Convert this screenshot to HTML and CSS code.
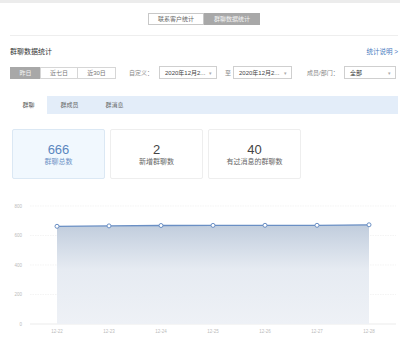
FILE: index.html
```html
<!DOCTYPE html>
<html lang="zh">
<head>
<meta charset="utf-8">
<link rel="stylesheet" href="styles.css">
</head>
<body>
<div class="topbar"></div>
<div class="page">
  <div class="switch-wrap">
    <div class="switch">
      <span class="sw">联系客户统计</span>
      <span class="sw active">群聊数据统计</span>
    </div>
  </div>
  <div class="title-row">
    <span class="title">群聊数据统计</span>
    <span class="help">统计说明 &gt;</span>
  </div>
  <div class="filter-row">
    <div class="range">
      <span class="rb active">昨日</span><span class="rb">近七日</span><span class="rb">近30日</span>
    </div>
    <span class="lbl l1">自定义：</span>
    <span class="sel s1"><span class="v">2020年12月2...</span><span class="arr">▾</span></span>
    <span class="lbl l2">至</span>
    <span class="sel s2"><span class="v">2020年12月2...</span><span class="arr">▾</span></span>
    <span class="lbl l3">成员/部门：</span>
    <span class="sel s3"><span class="v dark">全部</span><span class="arr">▾</span></span>
  </div>
  <div class="tabs">
    <span class="tab active">群聊</span><span class="tab">群成员</span><span class="tab">群消息</span>
  </div>
  <div class="cards">
    <div class="card hl"><div class="num">666</div><div class="cap">群聊总数</div></div>
    <div class="card"><div class="num">2</div><div class="cap">新增群聊数</div></div>
    <div class="card"><div class="num">40</div><div class="cap">有过消息的群聊数</div></div>
  </div>
</div>
<div class="chart">
  <svg width="400" height="156" viewBox="0 185 400 156" xmlns="http://www.w3.org/2000/svg">
    <defs>
      <linearGradient id="g" x1="0" y1="0" x2="0" y2="1">
        <stop offset="0" stop-color="#c1cddd"/>
        <stop offset="0.45" stop-color="#e6ebf2"/>
        <stop offset="1" stop-color="#eef1f6"/>
      </linearGradient>
    </defs>
    <g stroke="#ececec" stroke-width="0.6" stroke-dasharray="1.5 1">
      <line x1="30" y1="205" x2="396" y2="205"/>
      <line x1="30" y1="234.5" x2="396" y2="234.5"/>
      <line x1="30" y1="264" x2="396" y2="264"/>
      <line x1="30" y1="293.5" x2="396" y2="293.5"/>
    </g>
    <line x1="30" y1="323" x2="396" y2="323" stroke="#e6e6e6" stroke-width="0.8"/>
    <path d="M57 225.3 L109 224.9 L161 224.5 L213 224.4 L265 224.3 L317 224.3 L369 223.8 L369 323 L57 323 Z" fill="url(#g)"/>
    <polyline points="57,225.3 109,224.9 161,224.5 213,224.4 265,224.3 317,224.3 369,223.8" fill="none" stroke="#6a8fc4" stroke-width="1.3"/>
    <g fill="#fff" stroke="#6a8fc4" stroke-width="1">
      <circle cx="57" cy="225.3" r="2"/>
      <circle cx="109" cy="224.9" r="2"/>
      <circle cx="161" cy="224.5" r="2"/>
      <circle cx="213" cy="224.4" r="2"/>
      <circle cx="265" cy="224.3" r="2"/>
      <circle cx="317" cy="224.3" r="2"/>
      <circle cx="369" cy="223.8" r="2"/>
    </g>
    <g font-family="Liberation Sans, sans-serif" font-size="4.5" fill="#bbb" text-anchor="end">
      <text x="22" y="206.5">800</text>
      <text x="22" y="236">600</text>
      <text x="22" y="265.5">400</text>
      <text x="22" y="295">200</text>
      <text x="22" y="324.5">0</text>
    </g>
    <g font-family="Liberation Sans, sans-serif" font-size="4.5" fill="#bbb" text-anchor="middle">
      <text x="57" y="332">12-22</text>
      <text x="109" y="332">12-23</text>
      <text x="161" y="332">12-24</text>
      <text x="213" y="332">12-25</text>
      <text x="265" y="332">12-26</text>
      <text x="317" y="332">12-27</text>
      <text x="369" y="332">12-28</text>
    </g>
  </svg>
</div>
</body>
</html>
```
FILE: styles.css
```css
* { box-sizing: border-box; }
html, body { margin: 0; padding: 0; background: #fff; }
body {
  width: 400px;
  height: 341px;
  overflow: hidden;
  font-family: "Liberation Sans", "Noto Sans CJK SC", sans-serif;
  color: #555;
}
.topbar { height: 3px; background: #ececec; }
.page { padding: 0 2px 0 10px; }
.switch-wrap {
  display: flex;
  justify-content: center;
  padding: 10px 0 10px;
  border-bottom: 1px solid #eeeeee;
}
.switch { display: flex; }
.sw {
  width: 56px;
  height: 12px;
  font-size: 6px;
  line-height: 10px;
  text-align: center;
  border: 1px solid #c8c8c8;
  color: #666;
}
.sw.active { background: #a8a8a8; border-color: #a8a8a8; color: #f4f4f4; }
.title-row {
  display: flex;
  justify-content: space-between;
  align-items: center;
  height: 10px;
  margin-top: 10px;
}
.title { font-size: 7px; color: #333; }
.help { font-size: 6.5px; color: #4a7cc0; }
.filter-row {
  display: flex;
  align-items: center;
  height: 13px;
  margin-top: 10px;
}
.range { display: flex; }
.rb {
  height: 12px;
  font-size: 6px;
  line-height: 10px;
  text-align: center;
  border: 1px solid #d6d6d6;
  color: #777;
  margin-left: -1px;
}
.rb:first-child { margin-left: 0; }
.rb:nth-child(1) { width: 31px; }
.rb:nth-child(2) { width: 38px; }
.rb:nth-child(3) { width: 39px; }
.rb.active { background: #a8a8a8; border-color: #a8a8a8; color: #f4f4f4; }
.lbl { font-size: 6px; color: #888; }
.l1 { margin-left: 13px; width: 30px; }
.l2 { margin-left: 8px; width: 8px; }
.l3 { margin-left: 15px; width: 37px; }
.sel {
  display: flex;
  justify-content: space-between;
  align-items: center;
  height: 13px;
  border: 1px solid #cfcfcf;
  padding: 0 4px 0 5px;
  font-size: 6px;
}
.s1 { width: 58px; }
.s2 { width: 59px; }
.s3 { width: 52px; }
.sel .v { color: #444; }
.sel .v.dark { color: #333; }
.sel .arr { color: #aaa; font-size: 5px; }
.tabs {
  display: flex;
  height: 18px;
  margin-top: 17px;
  background: #e3edf9;
}
.tab {
  width: 45px;
  font-size: 6px;
  line-height: 18px;
  text-align: center;
  color: #666;
}
.tab:first-child { width: 37px; background: #fff; color: #555; }
.tab:nth-child(2) { width: 45px; }
.cards {
  display: flex;
  gap: 5px;
  margin-top: 15px;
  padding-left: 2px;
}
.card {
  width: 93px;
  height: 50px;
  border: 1px solid #eeeeee;
  border-radius: 2px;
  display: flex;
  flex-direction: column;
  align-items: center;
  justify-content: center;
}
.card.hl { background: #f1f8fe; border-color: #dbe8f4; }
.num { font-size: 13px; line-height: 15px; color: #444; }
.cap { font-size: 7px; line-height: 9px; color: #666; margin-top: 0; }
.card.hl .num { color: #5a86be; }
.card.hl .cap { color: #6d93c6; }
.chart { height: 156px; margin-top: 7px; }
.chart svg { display: block; }
```
